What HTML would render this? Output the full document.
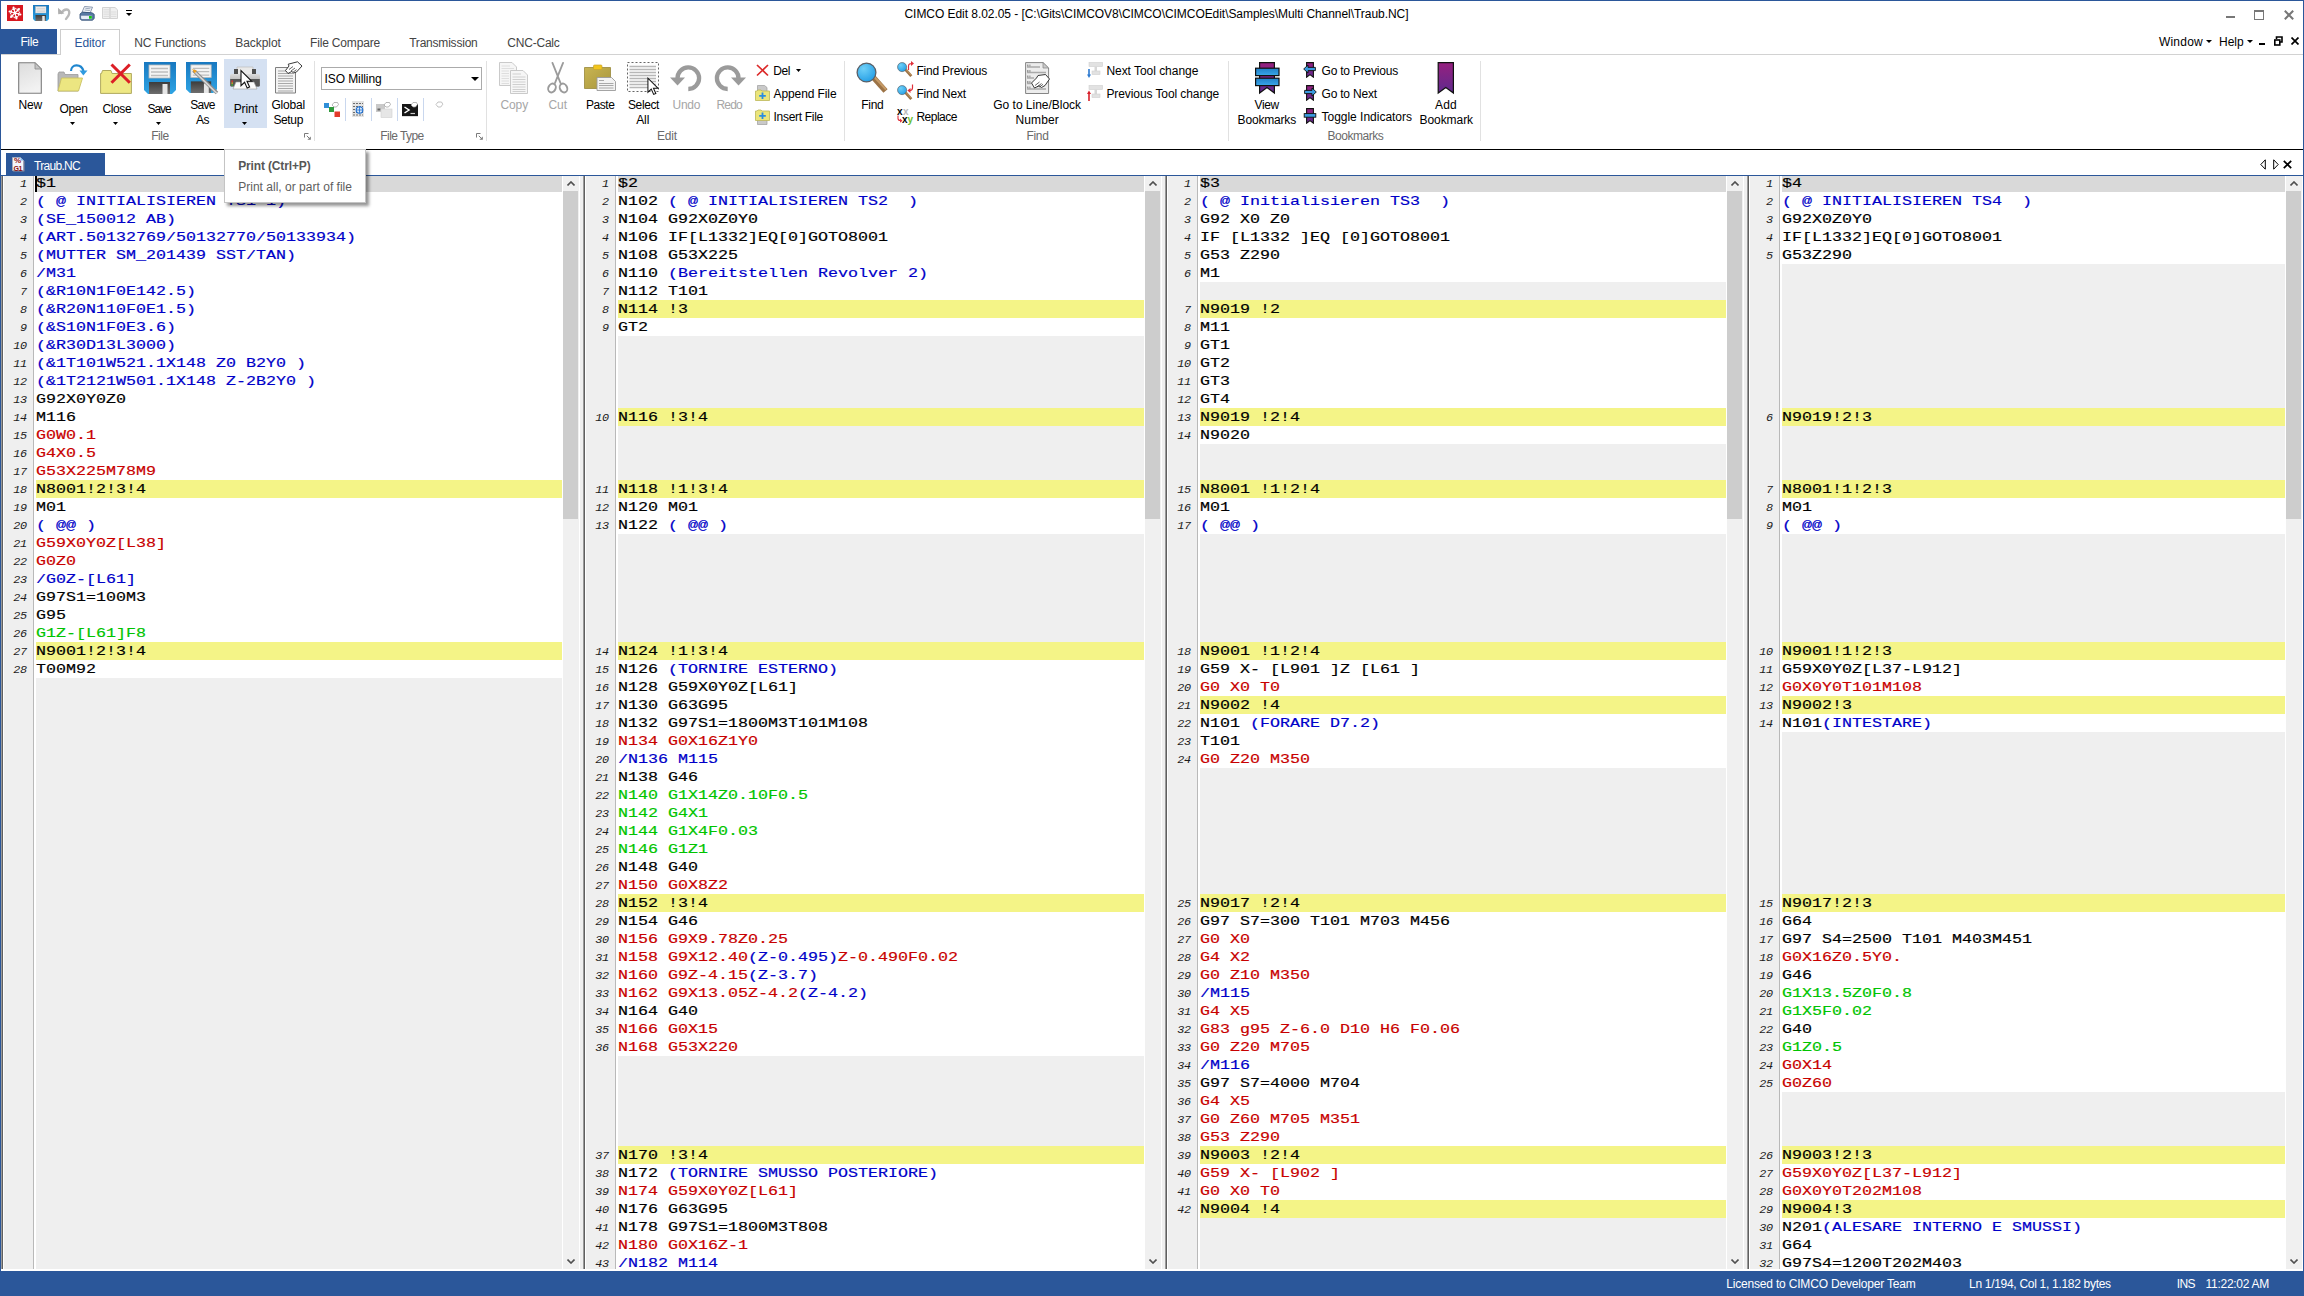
<!DOCTYPE html>
<html><head><meta charset="utf-8"><title>CIMCO Edit</title>
<style>
html,body{margin:0;padding:0}
body{width:2304px;height:1296px;position:relative;overflow:hidden;background:#fff;font-family:"Liberation Sans",sans-serif;font-size:12px;line-height:12px;color:#000}
.a{position:absolute;display:block}
.t{position:absolute;white-space:pre}
.pane{position:absolute;top:176px;height:1093px;overflow:hidden;background:#fff}
.rows{position:absolute;left:0;top:-2px;right:0}
.r{position:relative;height:18px}
.r i{position:absolute;left:0;width:25.6px;top:1px;height:18px;text-align:right;font:italic 11.8px/19.4px "Liberation Mono",monospace;letter-spacing:-0.4px;color:#1c1c1c}
.r b{position:absolute;left:35px;top:0;height:18px;right:0;font:normal 13.3px/18.9px "Liberation Mono",monospace;white-space:pre;-webkit-text-stroke:0.18px currentColor}
.r b u{position:absolute;left:0;top:1px;text-decoration:none;display:block;transform-origin:0 0;transform:scaleX(1.2529)}
.f b{background:#efefef}
.y b{background:#f4f487}
.c b{background:#d9d9d9}
.b{color:#0000c8}.rd{color:#c80000}.g{color:#00c400}
</style></head>
<body>
<div class="a" style="left:0px;top:0px;width:2304px;height:1px;background:#2b579a;"></div>
<div class="a" style="left:0px;top:0px;width:1px;height:1296px;background:#2b579a;"></div>
<div class="a" style="left:2303px;top:0px;width:1px;height:1296px;background:#2b579a;"></div>
<svg class="a" style="left:7px;top:5px" width="16" height="16" viewBox="0 0 16 16"><rect width="16" height="16" fill="#d81820"/><path d="M8 8L13.41 9.45M11.19 8.85L11.84 10.64M11.19 8.85L12.64 7.63M8 8L9.45 13.41M8.85 11.19L7.63 12.64M8.85 11.19L10.64 11.84M8 8L4.04 11.96M5.67 10.33L3.80 10.00M5.67 10.33L6.00 12.20M8 8L2.59 6.55M4.81 7.15L4.16 5.36M4.81 7.15L3.36 8.37M8 8L6.55 2.59M7.15 4.81L8.37 3.36M7.15 4.81L5.36 4.16M8 8L11.96 4.04M10.33 5.67L12.20 6.00M10.33 5.67L10.00 3.80" stroke="#fff" stroke-width="1.15" stroke-linecap="round" fill="none"/><g fill="#fff"><circle cx="13.41" cy="9.45" r="1.05"/><circle cx="9.45" cy="13.41" r="1.05"/><circle cx="4.04" cy="11.96" r="1.05"/><circle cx="2.59" cy="6.55" r="1.05"/><circle cx="6.55" cy="2.59" r="1.05"/><circle cx="11.96" cy="4.04" r="1.05"/><circle cx="8" cy="8" r="1.3"/></g></svg>
<svg class="a" style="left:33px;top:5px" width="16" height="16" viewBox="0 0 32 32"><defs><linearGradient id="fg33" x1="0" y1="0" x2="0" y2="1"><stop offset="0" stop-color="#1878c0"/><stop offset="1" stop-color="#2ea4e4"/></linearGradient><linearGradient id="fd33" x1="0" y1="0" x2="0" y2="1"><stop offset="0" stop-color="#3c3c3c"/><stop offset="1" stop-color="#6e6e6e"/></linearGradient></defs><path d="M0 0H32V28L28 32H4L0 28Z" fill="url(#fg33)"/><rect x="5" y="3" width="21" height="13" fill="#f4f4f4" stroke="#b9b9b9" stroke-width="0.8"/><path d="M7 6.5H24M7 10H24M7 13.5H24" stroke="#bdbdbd" stroke-width="1.3"/><rect x="5" y="20" width="21" height="12" fill="url(#fd33)"/><rect x="18.5" y="22" width="5" height="10" fill="#e6e6e6"/></svg>
<svg class="a" style="left:57px;top:5px" width="15" height="16" viewBox="0 0 15 16"><path d="M4.5 8C7 3.5 12.5 3 12.3 8C12.2 10.5 10.5 12.5 9 14" fill="none" stroke="#b9b9b9" stroke-width="2.4" stroke-linecap="round"/><path d="M1 2.8L1.2 9.2L7.4 8.6Z" fill="#b0b0b0"/></svg>
<svg class="a" style="left:79px;top:5px" width="16" height="17" viewBox="0 0 16 17"><path d="M5.5 1.5L13.5 2.2L11.2 7.8L3 7.2Z" fill="#f3f6fb" stroke="#6d7f9a" stroke-width="0.8"/><path d="M6.3 3.3L11.5 3.8M5.6 5L10.8 5.5" stroke="#8c9ab0" stroke-width="0.8"/><path d="M1 9L3.2 7.2L13 7.8L15.2 9.3V13.6L13.4 15.2H2.6L1 13.8Z" fill="#5a7ca6" stroke="#2c4a72" stroke-width="0.8"/><path d="M1.6 10.3H13.2V14.6H3L1.6 13.4Z" fill="#e6edf8" stroke="#3a5a86" stroke-width="0.6"/><rect x="10" y="11" width="2.8" height="2.7" fill="#14c814"/></svg>
<svg class="a" style="left:102px;top:7px" width="16" height="12" viewBox="0 0 16 12"><path d="M0.5 0.5H8V11.5H0.5Z M8 0.5H13L15.5 2.8V11.5H8Z" fill="#f0f0f0" stroke="#d3d3d3"/><path d="M1.5 2.8H7M1.5 5H7M1.5 7.2H7M1.5 9.4H7M9 5H14.5M9 7.2H14.5M9 9.4H14.5" stroke="#dcdcdc"/></svg>
<div class="a" style="left:126px;top:10px;width:6px;height:1px;background:#000;"></div>
<svg class="a" style="left:126px;top:13px" width="6" height="3" viewBox="0 0 6 3"><path d="M0 0H6L3.0 3Z" fill="#000"/></svg>
<span class="t" style="left:904.50px;top:7.84px;letter-spacing:-0.052px;">CIMCO Edit 8.02.05 - [C:\Gits\CIMCOV8\CIMCO\CIMCOEdit\Samples\Multi Channel\Traub.NC]</span>
<div class="a" style="left:2226px;top:16px;width:9px;height:2px;background:#777;"></div>
<div class="a" style="left:2254px;top:10px;width:8px;height:7px;border:1px solid #777;border-top:2px solid #777"></div>
<svg class="a" style="left:2284px;top:10px" width="10" height="10" viewBox="0 0 10 10"><path d="M0.8 0.8L9.2 9.2M9.2 0.8L0.8 9.2" stroke="#777" stroke-width="2"/></svg>
<div class="a" style="left:0px;top:29px;width:57px;height:25px;background:#2b579a;"></div>
<span class="t" style="left:20.40px;top:36.14px;color:#fff;letter-spacing:-0.359px;">File</span>
<div class="a" style="left:1px;top:54px;width:60px;height:1px;background:#d2d2d2;"></div>
<div class="a" style="left:119px;top:54px;width:2184px;height:1px;background:#d2d2d2;"></div>
<div class="a" style="left:60px;top:29px;width:58px;height:25px;border:1px solid #cdcdcd;border-bottom:none"></div>
<span class="t" style="left:74.50px;top:36.84px;color:#2b579a;letter-spacing:-0.092px;">Editor</span>
<span class="t" style="left:134.30px;top:36.84px;color:#444;letter-spacing:-0.091px;">NC Functions</span>
<span class="t" style="left:235.20px;top:36.84px;color:#444;letter-spacing:-0.053px;">Backplot</span>
<span class="t" style="left:310.00px;top:36.84px;color:#444;letter-spacing:-0.169px;">File Compare</span>
<span class="t" style="left:409.20px;top:36.84px;color:#444;letter-spacing:-0.209px;">Transmission</span>
<span class="t" style="left:507.30px;top:36.84px;color:#444;letter-spacing:-0.213px;">CNC-Calc</span>
<span class="t" style="left:2158.90px;top:35.84px;letter-spacing:0.237px;">Window</span>
<svg class="a" style="left:2206px;top:40px" width="6" height="3" viewBox="0 0 6 3"><path d="M0 0H6L3.0 3Z" fill="#000"/></svg>
<span class="t" style="left:2219.00px;top:35.84px;letter-spacing:-0.020px;">Help</span>
<svg class="a" style="left:2247px;top:40px" width="6" height="3" viewBox="0 0 6 3"><path d="M0 0H6L3.0 3Z" fill="#000"/></svg>
<div class="a" style="left:2259px;top:43px;width:6px;height:2px;background:#000;"></div>
<svg class="a" style="left:2274px;top:36px" width="9" height="10" viewBox="0 0 9 10"><path d="M2.5 3V1H8V6H6" fill="none" stroke="#000" stroke-width="1.6"/><rect x="0.8" y="4" width="5" height="5" fill="none" stroke="#000" stroke-width="1.6"/></svg>
<svg class="a" style="left:2291px;top:37px" width="8" height="8" viewBox="0 0 8 8"><path d="M0.5 0.5L7.5 7.5M7.5 0.5L0.5 7.5" stroke="#000" stroke-width="1.7"/></svg>
<div class="a" style="left:314px;top:61px;width:1px;height:80px;background:#e1e1e1;"></div>
<div class="a" style="left:486px;top:61px;width:1px;height:80px;background:#e1e1e1;"></div>
<div class="a" style="left:844px;top:61px;width:1px;height:80px;background:#e1e1e1;"></div>
<div class="a" style="left:1228px;top:61px;width:1px;height:80px;background:#e1e1e1;"></div>
<div class="a" style="left:1480px;top:61px;width:1px;height:80px;background:#e1e1e1;"></div>
<svg class="a" style="left:18px;top:62px" width="24" height="32" viewBox="0 0 24 32"><defs><linearGradient id="gn" x1="0" y1="0" x2="0.3" y2="1"><stop offset="0" stop-color="#dcdcdc"/><stop offset="1" stop-color="#f2f2f2"/></linearGradient></defs><path d="M0.7 0.7H17L23.3 7V31.3H0.7Z" fill="url(#gn)" stroke="#7d7d7d" stroke-width="1.1"/><path d="M17 0.7V7H23.3Z" fill="#c4c4c4" stroke="#8a8a8a" stroke-width="0.8"/></svg>
<span class="t" style="left:18.50px;top:98.84px;letter-spacing:-0.169px;">New</span>
<svg class="a" style="left:57px;top:63px" width="32" height="29" viewBox="0 0 32 29"><path d="M1 11L2 9H7L8 11.5H21V28H1Z" fill="#b8b8b8" stroke="#9a9a9a" stroke-width="0.8"/><path d="M4.5 15H25.5L21.5 28H1Z" fill="#ece681" stroke="#c9c163" stroke-width="0.9"/><path d="M14 8C14 1 24 0 26.5 8" fill="none" stroke="#1f86cf" stroke-width="2.2"/><path d="M22.5 7.5H30.5L26.3 12.5Z" fill="#2f9be0"/></svg>
<span class="t" style="left:59.40px;top:102.84px;letter-spacing:-0.289px;">Open</span>
<svg class="a" style="left:70px;top:122px" width="5" height="3" viewBox="0 0 5 3"><path d="M0 0H5L2.5 3Z" fill="#000"/></svg>
<svg class="a" style="left:100px;top:63px" width="33" height="31" viewBox="0 0 33 31"><path d="M0.6 10.5H1.5L2.5 7.5H11L12 10.5H31.4V30.4H0.6Z" fill="#eee884" stroke="#b0a960" stroke-width="1"/><path d="M11.5 1.5L29.8 19.8M29.8 1.5L11.5 19.8" stroke="#dc1f26" stroke-width="3"/></svg>
<span class="t" style="left:102.60px;top:102.84px;letter-spacing:-0.416px;">Close</span>
<svg class="a" style="left:113px;top:122px" width="5" height="3" viewBox="0 0 5 3"><path d="M0 0H5L2.5 3Z" fill="#000"/></svg>
<svg class="a" style="left:144px;top:62px" width="32" height="32" viewBox="0 0 32 32"><defs><linearGradient id="fg144" x1="0" y1="0" x2="0" y2="1"><stop offset="0" stop-color="#1878c0"/><stop offset="1" stop-color="#2ea4e4"/></linearGradient><linearGradient id="fd144" x1="0" y1="0" x2="0" y2="1"><stop offset="0" stop-color="#3c3c3c"/><stop offset="1" stop-color="#6e6e6e"/></linearGradient></defs><path d="M0 0H32V28L28 32H4L0 28Z" fill="url(#fg144)"/><rect x="5" y="3" width="21" height="13" fill="#f4f4f4" stroke="#b9b9b9" stroke-width="0.8"/><path d="M7 6.5H24M7 10H24M7 13.5H24" stroke="#bdbdbd" stroke-width="1.3"/><rect x="5" y="20" width="21" height="12" fill="url(#fd144)"/><rect x="18.5" y="22" width="5" height="10" fill="#e6e6e6"/></svg>
<span class="t" style="left:147.40px;top:102.84px;letter-spacing:-0.988px;">Save</span>
<svg class="a" style="left:156px;top:122px" width="5" height="3" viewBox="0 0 5 3"><path d="M0 0H5L2.5 3Z" fill="#000"/></svg>
<svg class="a" style="left:186px;top:62px" width="31" height="31" viewBox="0 0 32 32"><defs><linearGradient id="fg186" x1="0" y1="0" x2="0" y2="1"><stop offset="0" stop-color="#1878c0"/><stop offset="1" stop-color="#2ea4e4"/></linearGradient><linearGradient id="fd186" x1="0" y1="0" x2="0" y2="1"><stop offset="0" stop-color="#3c3c3c"/><stop offset="1" stop-color="#6e6e6e"/></linearGradient></defs><path d="M0 0H32V28L28 32H4L0 28Z" fill="url(#fg186)"/><rect x="5" y="3" width="21" height="13" fill="#f4f4f4" stroke="#b9b9b9" stroke-width="0.8"/><path d="M7 6.5H24M7 10H24M7 13.5H24" stroke="#bdbdbd" stroke-width="1.3"/><rect x="5" y="20" width="21" height="12" fill="url(#fd186)"/><rect x="18.5" y="22" width="5" height="10" fill="#e6e6e6"/></svg>
<svg class="a" style="left:190px;top:66px" width="30" height="30" viewBox="0 0 30 30"><path d="M3.5 4.5L27 27" stroke="#8d8d8d" stroke-width="3.6"/><path d="M4.5 5.5L27 27.5" stroke="#d8d8d8" stroke-width="1.6"/><path d="M2 3L7 4.8L4.6 7.3Z" fill="#f2a21e"/></svg>
<span class="t" style="left:190.25px;top:98.84px;letter-spacing:-0.713px;">Save</span>
<span class="t" style="left:196.00px;top:113.84px;letter-spacing:-0.502px;">As</span>
<div class="a" style="left:224px;top:59px;width:43px;height:69px;background:#d5e1f2;"></div>
<svg class="a" style="left:229px;top:66px" width="32" height="26" viewBox="0 0 32 26"><defs><linearGradient id="pg" x1="0" y1="0" x2="0" y2="1"><stop offset="0" stop-color="#dcdcdc"/><stop offset="1" stop-color="#9b9b9b"/></linearGradient></defs><path d="M8 1H24V9H8Z" fill="#e9e9e9" stroke="#bdbdbd" stroke-width="0.7"/><rect x="5" y="3" width="4" height="7" fill="#4e4e4e"/><rect x="23" y="3" width="4" height="7" fill="#4e4e4e"/><path d="M1 9.5C1 8.5 2 8 3 8H29C30 8 31 8.5 31 9.5V19C31 20 30.3 20.5 29.5 20.5H2.5C1.7 20.5 1 20 1 19Z" fill="url(#pg)"/><path d="M1.2 13H30.8V19.5C30.8 20 30 20.5 29.5 20.5H2.5C2 20.5 1.2 20 1.2 19.5Z" fill="#565656"/><path d="M7 16H25L28 23H4Z" fill="#fbfbfb" stroke="#9c9c9c" stroke-width="0.6"/><rect x="2.4" y="14.5" width="1.6" height="1.4" fill="#e03030"/><rect x="2.4" y="16.4" width="1.6" height="1.4" fill="#e0a020"/><rect x="2.4" y="18.3" width="1.6" height="1.4" fill="#40b030"/></svg>
<span class="t" style="left:233.70px;top:102.84px;letter-spacing:-0.115px;">Print</span>
<svg class="a" style="left:241.5px;top:122px" width="5" height="3" viewBox="0 0 5 3"><path d="M0 0H5L2.5 3Z" fill="#000"/></svg>
<svg class="a" style="left:239.5px;top:69px" width="13" height="21" viewBox="0 0 13 20"><path d="M1 1V16.2L4.6 12.8L7.2 18.6L9.6 17.5L7 11.8H11.8Z" fill="#fff" stroke="#111" stroke-width="1.1" stroke-linejoin="miter"/></svg>
<svg class="a" style="left:274px;top:61px" width="30" height="33" viewBox="0 0 30 33"><path d="M1.5 6.5H21.5V32H1.5Z" fill="#f3f3f3" stroke="#7f7f7f" stroke-width="1"/><path d="M4 10H19M4 12.5H19M4 15H19M4 17.5H19M4 20H19M4 22.5H19M4 25H19M4 27.5H19M4 30H19" stroke="#a8a8a8" stroke-width="1.2"/><path d="M11.5 9.5L15 5L14.2 3.2L23.5 0.8L28 5L22.5 11L19.5 12L17.8 10.4L14 12.5Z" fill="#fff" stroke="#222" stroke-width="0.9" stroke-linejoin="round"/><path d="M15 8.5L19 5.5M17 10L21 7M19 11.3L22.5 8.6" stroke="#222" stroke-width="0.7"/></svg>
<span class="t" style="left:271.45px;top:98.84px;letter-spacing:-0.198px;">Global</span>
<span class="t" style="left:273.45px;top:113.84px;letter-spacing:-0.372px;">Setup</span>
<span class="t" style="left:151.30px;top:129.84px;color:#6a6a6a;letter-spacing:-0.509px;">File</span>
<svg class="a" style="left:304px;top:133px" width="8" height="8" viewBox="0 0 8 8"><path d="M0.5 4.5V0.5H4.5" fill="none" stroke="#7a7a7a" stroke-width="1"/><path d="M2.8 2.8L6 6" stroke="#7a7a7a" stroke-width="1"/><path d="M6.8 3.4V6.8H3.4Z" fill="#7a7a7a"/></svg>
<svg class="a" style="left:476px;top:133px" width="8" height="8" viewBox="0 0 8 8"><path d="M0.5 4.5V0.5H4.5" fill="none" stroke="#7a7a7a" stroke-width="1"/><path d="M2.8 2.8L6 6" stroke="#7a7a7a" stroke-width="1"/><path d="M6.8 3.4V6.8H3.4Z" fill="#7a7a7a"/></svg>
<div class="a" style="left:321px;top:67px;width:159px;height:21px;border:1px solid #ababab;background:#fff"></div>
<span class="t" style="left:324.50px;top:72.84px;letter-spacing:-0.083px;">ISO Milling</span>
<svg class="a" style="left:471px;top:77px" width="8" height="4" viewBox="0 0 8 4"><path d="M0 0H8L4.0 4Z" fill="#000"/></svg>
<div class="a" style="left:345px;top:98px;width:1px;height:23px;background:#c9d7ee;"></div>
<div class="a" style="left:371px;top:98px;width:1px;height:23px;background:#c9d7ee;"></div>
<div class="a" style="left:397px;top:98px;width:1px;height:23px;background:#c9d7ee;"></div>
<div class="a" style="left:423px;top:98px;width:1px;height:23px;background:#c9d7ee;"></div>
<svg class="a" style="left:324px;top:101px" width="17" height="17" viewBox="0 0 17 17"><rect x="0" y="2" width="5" height="5" fill="#2f8fd8"/><rect x="5" y="6" width="5" height="5" fill="#2f9a3c"/><rect x="10.5" y="10.5" width="5.5" height="5.5" fill="#e23a2a"/><path d="M8 4L10 1.5H13.5L14.5 3.5L12.5 6H10Z" fill="#fff" stroke="#999" stroke-width="0.7"/></svg>
<svg class="a" style="left:352px;top:101px" width="12" height="16" viewBox="0 0 12 16"><rect width="12" height="16" fill="#e4e4e4"/><path d="M1 2.5H11M1 5.5H11M1 8.5H11M1 11.5H11M1 14H11" stroke="#6c6c6c" stroke-width="1.2" stroke-dasharray="2 1"/><circle cx="7.5" cy="9" r="3.3" fill="#d8e8f8" stroke="#1f6fd0" stroke-width="1.1"/><path d="M7.5 5.7V12.3M4.2 9H10.8" stroke="#1f6fd0" stroke-width="0.8"/></svg>
<svg class="a" style="left:376px;top:101px" width="17" height="17" viewBox="0 0 17 17"><rect x="0" y="3" width="9" height="8" fill="#c9c9c9"/><rect x="1.5" y="7.5" width="3" height="2" fill="#666"/><rect x="5" y="8" width="11" height="8.5" fill="#e6e6e6" stroke="#cfcfcf" stroke-width="0.6"/><path d="M8 4L10 1.5H13.5L14.5 3.5L12.5 6H10Z" fill="#fff" stroke="#999" stroke-width="0.7"/></svg>
<svg class="a" style="left:402px;top:101px" width="17" height="17" viewBox="0 0 17 17"><rect x="0" y="3" width="16" height="13" fill="#161616"/><path d="M0 15.5H16" stroke="#ddd" stroke-width="1"/><path d="M2.5 6L7 9L2.5 12" fill="none" stroke="#fff" stroke-width="1.5"/><path d="M8.5 12.5H13" stroke="#ccc" stroke-width="1.2"/><path d="M9 4L11 1.5H14.5L15.5 3.5L13.5 6H11Z" fill="#fff" stroke="#999" stroke-width="0.7"/></svg>
<svg class="a" style="left:435px;top:101px" width="9" height="8" viewBox="0 0 9 8"><path d="M1 3.5L3 1H6.5L7.8 3.2L5.8 6H3Z" fill="#fff" stroke="#b3b3b3" stroke-width="0.8"/></svg>
<span class="t" style="left:380.30px;top:129.84px;color:#6a6a6a;letter-spacing:-0.563px;">File Type</span>
<svg class="a" style="left:499px;top:62px" width="30" height="32" viewBox="0 0 30 32"><g stroke="#c4c4c4" stroke-width="0.9" fill="#f6f6f6"><path d="M0.5 0.5H13L17.5 5V23.5H0.5Z"/><path d="M11.5 8.5H24L28.5 13V31.5H11.5Z"/></g><path d="M2.5 4H11M2.5 6.5H15M2.5 9H10M2.5 11.5H10M2.5 14H10M2.5 16.5H10M2.5 19H10M2.5 21.5H10" stroke="#dedede" stroke-width="1.1"/><path d="M13.5 12H22M13.5 15H26.5M13.5 17.5H26.5M13.5 20H26.5M13.5 22.5H26.5M13.5 25H26.5M13.5 27.5H26.5M13.5 29.5H26.5" stroke="#cfcfcf" stroke-width="1.1"/></svg>
<span class="t" style="left:500.50px;top:98.84px;color:#a6a6a6;letter-spacing:-0.129px;">Copy</span>
<svg class="a" style="left:547px;top:62px" width="22" height="32" viewBox="0 0 22 32"><path d="M5.5 1L13.5 21M16 1L8 21" stroke="#9b9b9b" stroke-width="1.9" stroke-linecap="round"/><ellipse cx="5" cy="26" rx="3.6" ry="4.6" fill="none" stroke="#9b9b9b" stroke-width="1.9" transform="rotate(25 5 26)"/><ellipse cx="16.5" cy="26" rx="3.6" ry="4.6" fill="none" stroke="#9b9b9b" stroke-width="1.9" transform="rotate(-25 16.5 26)"/></svg>
<span class="t" style="left:548.50px;top:98.84px;color:#a6a6a6;letter-spacing:-0.058px;">Cut</span>
<svg class="a" style="left:584px;top:64px" width="33" height="28" viewBox="0 0 33 28"><defs><linearGradient id="pa" x1="0" y1="0" x2="1" y2="1"><stop offset="0" stop-color="#c8b452"/><stop offset="1" stop-color="#a8963c"/></linearGradient></defs><path d="M0.5 3.5H26.5V24.5H0.5Z" fill="url(#pa)" stroke="#98883a" stroke-width="0.8"/><rect x="9.5" y="1" width="8.5" height="4.5" rx="1" fill="#f2c51c" stroke="#c9a42a" stroke-width="0.7"/><path d="M13 13.5H27.5L31.5 17.5V26.5H13Z" fill="#f3f3f3" stroke="#9a9a9a" stroke-width="0.9"/><path d="M15 16.5H20M15 19.5H29.5M15 21.5H29.5M15 24H29.5" stroke="#a9a9a9" stroke-width="1.1"/></svg>
<span class="t" style="left:586.00px;top:98.84px;letter-spacing:-0.437px;">Paste</span>
<svg class="a" style="left:627px;top:62px" width="33" height="32" viewBox="0 0 33 32"><rect x="0.5" y="0.5" width="31" height="29" fill="#fdfdfd" stroke="#555" stroke-width="0.9" stroke-dasharray="2 2"/><path d="M2.5 4.5H29M2.5 7.5H29M2.5 10.5H29M2.5 13.5H29M2.5 16.5H29M2.5 19.5H29M2.5 22.5H29M2.5 25.5H29" stroke="#b7b7b7" stroke-width="1.3"/></svg>
<svg class="a" style="left:647px;top:77px" width="12" height="19" viewBox="0 0 13 20"><path d="M1 1V16.2L4.6 12.8L7.2 18.6L9.6 17.5L7 11.8H11.8Z" fill="#fff" stroke="#111" stroke-width="1.1" stroke-linejoin="miter"/></svg>
<span class="t" style="left:628.00px;top:98.84px;letter-spacing:-0.392px;">Select</span>
<span class="t" style="left:636.20px;top:113.84px;letter-spacing:-0.112px;">All</span>
<svg class="a" style="left:670px;top:64px" width="32" height="28" viewBox="0 0 32 28"><path d="M7.5 14.5A10.8 10.8 0 1 1 18.3 25" fill="none" stroke="#9b9b9b" stroke-width="4.3"/><path d="M0 13.5H15L7.5 21.5Z" fill="#9b9b9b"/></svg>
<svg class="a" style="left:714px;top:64px" width="32" height="28" viewBox="0 0 32 28"><path d="M24.5 14.5A10.8 10.8 0 1 0 13.7 25" fill="none" stroke="#9b9b9b" stroke-width="4.3"/><path d="M32 13.5H17L24.5 21.5Z" fill="#9b9b9b"/></svg>
<span class="t" style="left:672.60px;top:98.84px;color:#a6a6a6;letter-spacing:-0.322px;">Undo</span>
<span class="t" style="left:716.50px;top:98.84px;color:#a6a6a6;letter-spacing:-0.797px;">Redo</span>
<svg class="a" style="left:756px;top:64px" width="13" height="13" viewBox="0 0 13 13"><path d="M1 1L12 11.5M12 1L1 11.5" stroke="#dc2a2a" stroke-width="1.7"/></svg>
<span class="t" style="left:773.30px;top:64.84px;letter-spacing:-0.502px;">Del</span>
<svg class="a" style="left:796px;top:69px" width="5" height="3" viewBox="0 0 5 3"><path d="M0 0H5L2.5 3Z" fill="#000"/></svg>
<svg class="a" style="left:755px;top:85px" width="15" height="17" viewBox="0 0 15 17"><path d="M2.5 0.5H9.5L12 2.5V6.5H2.5Z" fill="#c9c9c9" stroke="#9c9c9c" stroke-width="0.7"/><path d="M0.5 6H2L3 5H6L7 6H14.5V15.5H0.5Z" fill="#ebe57a" stroke="#bdb65a" stroke-width="0.8"/><path d="M7.5 7.5V14M4.2 10.8H10.8" stroke="#2a8ce0" stroke-width="1.8"/></svg>
<svg class="a" style="left:755px;top:108px" width="15" height="17" viewBox="0 0 15 17"><path d="M2.5 10.5H9.5L12 12.5V16.5H2.5Z" fill="#c9c9c9" stroke="#9c9c9c" stroke-width="0.7"/><path d="M0.5 3H2L3 2H6L7 3H14.5V12.5H0.5Z" fill="#ebe57a" stroke="#bdb65a" stroke-width="0.8"/><path d="M7.5 4.5V11M4.2 7.8H10.8" stroke="#2a8ce0" stroke-width="1.8"/></svg>
<span class="t" style="left:773.50px;top:87.84px;letter-spacing:-0.095px;">Append File</span>
<span class="t" style="left:773.50px;top:110.84px;letter-spacing:-0.289px;">Insert File</span>
<span class="t" style="left:657.00px;top:129.84px;color:#6a6a6a;letter-spacing:-0.170px;">Edit</span>
<svg class="a" style="left:856px;top:62px" width="33" height="33" viewBox="0 0 33 33"><defs><radialGradient id="mg856" cx="0.35" cy="0.3" r="0.8"><stop offset="0" stop-color="#6fd0f8"/><stop offset="1" stop-color="#1f9be4"/></radialGradient></defs><path d="M17 15L29.5 29" stroke="#9c7346" stroke-width="5.6"/><path d="M17.5 14L30 27.5" stroke="#c69a66" stroke-width="2"/><circle cx="10.5" cy="10.5" r="9.4" fill="url(#mg856)" stroke="#5a5f66" stroke-width="1.3"/></svg>
<span class="t" style="left:861.30px;top:98.84px;letter-spacing:-0.311px;">Find</span>
<svg class="a" style="left:897px;top:62px" width="16" height="16" viewBox="0 0 33 33"><defs><radialGradient id="mg897" cx="0.35" cy="0.3" r="0.8"><stop offset="0" stop-color="#6fd0f8"/><stop offset="1" stop-color="#1f9be4"/></radialGradient></defs><path d="M17 15L29.5 29" stroke="#9c7346" stroke-width="5.6"/><path d="M17.5 14L30 27.5" stroke="#c69a66" stroke-width="2"/><circle cx="10.5" cy="10.5" r="9.4" fill="url(#mg897)" stroke="#5a5f66" stroke-width="1.3"/></svg>
<svg class="a" style="left:897px;top:85px" width="16" height="16" viewBox="0 0 33 33"><defs><radialGradient id="mg897" cx="0.35" cy="0.3" r="0.8"><stop offset="0" stop-color="#6fd0f8"/><stop offset="1" stop-color="#1f9be4"/></radialGradient></defs><path d="M17 15L29.5 29" stroke="#9c7346" stroke-width="5.6"/><path d="M17.5 14L30 27.5" stroke="#c69a66" stroke-width="2"/><circle cx="10.5" cy="10.5" r="9.4" fill="url(#mg897)" stroke="#5a5f66" stroke-width="1.3"/></svg>
<svg class="a" style="left:907px;top:61px" width="7" height="10" viewBox="0 0 7 10"><path d="M1.5 9V5C1.5 3 3 2.5 5 2.5" fill="none" stroke="#e0303a" stroke-width="1.2"/><path d="M4 0L7 2.5L4 5Z" fill="#e0303a"/></svg>
<svg class="a" style="left:907px;top:84px" width="7" height="10" viewBox="0 0 7 10"><path d="M5.5 0.5V4C5.5 6 4 6.5 2.5 6.5" fill="none" stroke="#e0303a" stroke-width="1.2"/><path d="M3.5 4L0.3 6.5L3.5 9Z" fill="#e0303a"/></svg>
<span class="t" style="left:916.40px;top:64.84px;letter-spacing:-0.205px;">Find Previous</span>
<span class="t" style="left:916.40px;top:87.84px;letter-spacing:-0.206px;">Find Next</span>
<span class="t" style="left:916.40px;top:110.84px;letter-spacing:-0.490px;">Replace</span>
<span class="t" style="left:897.00px;top:106.53px;font-size:10px;line-height:10px;font-weight:bold;">x</span>
<span class="t" style="left:903.00px;top:106.53px;font-size:10px;line-height:10px;color:#bbb;font-weight:bold;">x</span>
<span class="t" style="left:902.00px;top:115.03px;font-size:10px;line-height:10px;font-weight:bold;">x</span>
<span class="t" style="left:907.50px;top:115.03px;font-size:10px;line-height:10px;color:#6cc030;font-weight:bold;">y</span>
<svg class="a" style="left:897px;top:115px" width="6" height="8" viewBox="0 0 6 8"><path d="M1 0.5V3.5C1 5 2 5.5 3.5 5.5" fill="none" stroke="#e0303a" stroke-width="1.1"/><path d="M3 3.5L5.5 5.7L3 7.8Z" fill="#e0303a"/></svg>
<svg class="a" style="left:1025px;top:62px" width="26" height="33" viewBox="0 0 26 33"><path d="M0.6 0.6H18L23.6 6V31.5H0.6Z" fill="#ececec" stroke="#858585" stroke-width="1"/><path d="M18 0.6V6H23.6Z" fill="#c9c9c9" stroke="#858585" stroke-width="0.7"/><path d="M2 5H15M2 10.5H21M2 16H9M2 21.5H6M2 27H21" stroke="#a9a9a9" stroke-width="1.3"/><path d="M2 3.5H5.5M2 9H5.5M2 14.5H5.5M2 20H5.5M2 25.5H5.5" stroke="#9a9a9a" stroke-width="2" stroke-dasharray="1.5 0.8"/><path d="M6.5 21L11.5 16L13 13.5L20.5 12.5L24.5 17L20 23.5L16.5 25.5L14 23.8L9.5 26Z" fill="#fff" stroke="#222" stroke-width="0.9" stroke-linejoin="round"/><path d="M10 23.5L14.5 20M12 25L16.5 21.5M14.5 25L18 22.3" stroke="#222" stroke-width="0.7"/></svg>
<span class="t" style="left:993.30px;top:98.84px;letter-spacing:-0.022px;">Go to Line/Block</span>
<span class="t" style="left:1015.50px;top:113.84px;letter-spacing:0.136px;">Number</span>
<span class="t" style="left:1026.50px;top:129.84px;color:#6a6a6a;letter-spacing:-0.336px;">Find</span>
<svg class="a" style="left:1087px;top:62px" width="16" height="17" viewBox="0 0 16 17"><rect x="2" y="0.5" width="13.5" height="4" fill="#e2e2e2" stroke="#cfcfcf" stroke-width="0.6"/><rect x="7.5" y="4.5" width="2.5" height="4.5" fill="#d7d7d7"/><rect x="5" y="9" width="8" height="3.5" fill="#e2e2e2" stroke="#cfcfcf" stroke-width="0.6"/><path d="M2 7V14" stroke="#2a78d0" stroke-width="1.6"/><path d="M0 12.5L2 16L4 12.5Z" fill="#2a78d0"/></svg>
<svg class="a" style="left:1087px;top:85px" width="16" height="17" viewBox="0 0 16 17"><rect x="2" y="0.5" width="13.5" height="4" fill="#e2e2e2" stroke="#cfcfcf" stroke-width="0.6"/><rect x="7.5" y="4.5" width="2.5" height="4.5" fill="#d7d7d7"/><rect x="5" y="9" width="8" height="3.5" fill="#e2e2e2" stroke="#cfcfcf" stroke-width="0.6"/><path d="M2 16V7" stroke="#d8202a" stroke-width="1.6"/><path d="M0 9L2 5.5L4 9Z" fill="#d8202a"/></svg>
<span class="t" style="left:1106.40px;top:64.84px;letter-spacing:-0.038px;">Next Tool change</span>
<span class="t" style="left:1106.40px;top:87.84px;letter-spacing:-0.086px;">Previous Tool change</span>
<svg class="a" style="left:1255px;top:62px" width="25" height="33" viewBox="0 0 25 33"><defs><linearGradient id="vb1" x1="0" y1="0" x2="0" y2="1"><stop offset="0" stop-color="#96207f"/><stop offset="1" stop-color="#5f2a8e"/></linearGradient><linearGradient id="vb2" x1="0" y1="0" x2="0" y2="1"><stop offset="0" stop-color="#1f7fc8"/><stop offset="1" stop-color="#3aa6e8"/></linearGradient></defs><path d="M4.6 0.6H19.4V31L12 25.5L4.6 31Z" fill="url(#vb1)" stroke="#111" stroke-width="1.2"/><rect x="0.6" y="6.2" width="23.4" height="7.4" fill="url(#vb2)" stroke="#111" stroke-width="1.2"/><rect x="0.6" y="16.2" width="23.4" height="7.4" fill="url(#vb2)" stroke="#111" stroke-width="1.2"/></svg>
<span class="t" style="left:1254.40px;top:98.84px;letter-spacing:-0.299px;">View</span>
<span class="t" style="left:1237.60px;top:113.84px;letter-spacing:-0.180px;">Bookmarks</span>
<svg class="a" style="left:1303px;top:62px" width="14" height="16" viewBox="0 0 14 16"><defs><linearGradient id="sb62" x1="0" y1="0" x2="0" y2="1"><stop offset="0" stop-color="#96207f"/><stop offset="1" stop-color="#5f2a8e"/></linearGradient></defs><path d="M3.6 0.6H10.4V15.2L7 12.6L3.6 15.2Z" fill="url(#sb62)" stroke="#111" stroke-width="1.1"/><path d="M0.7 7L5 3V5.4H12.4V8.6H5V11Z" fill="#3a9be0" stroke="#111" stroke-width="0.9"/></svg>
<svg class="a" style="left:1303px;top:85px" width="14" height="16" viewBox="0 0 14 16"><defs><linearGradient id="sb85" x1="0" y1="0" x2="0" y2="1"><stop offset="0" stop-color="#96207f"/><stop offset="1" stop-color="#5f2a8e"/></linearGradient></defs><path d="M3.6 0.6H10.4V15.2L7 12.6L3.6 15.2Z" fill="url(#sb85)" stroke="#111" stroke-width="1.1"/><path d="M13.3 7L9 3V5.4H1.6V8.6H9V11Z" fill="#3a9be0" stroke="#111" stroke-width="0.9"/></svg>
<svg class="a" style="left:1303px;top:108px" width="14" height="16" viewBox="0 0 14 16"><defs><linearGradient id="sb108" x1="0" y1="0" x2="0" y2="1"><stop offset="0" stop-color="#96207f"/><stop offset="1" stop-color="#5f2a8e"/></linearGradient></defs><path d="M3.6 0.6H10.4V15.2L7 12.6L3.6 15.2Z" fill="url(#sb108)" stroke="#111" stroke-width="1.1"/><rect x="1.2" y="5.6" width="11.6" height="3.6" fill="#3a9be0" stroke="#111" stroke-width="0.9"/></svg>
<span class="t" style="left:1321.50px;top:64.84px;letter-spacing:-0.205px;">Go to Previous</span>
<span class="t" style="left:1321.50px;top:87.84px;letter-spacing:-0.206px;">Go to Next</span>
<span class="t" style="left:1321.50px;top:110.84px;letter-spacing:-0.013px;">Toggle Indicators</span>
<svg class="a" style="left:1437px;top:62px" width="18" height="33" viewBox="0 0 18 33"><defs><linearGradient id="ab1" x1="0" y1="0" x2="0" y2="1"><stop offset="0" stop-color="#96207f"/><stop offset="1" stop-color="#5f2a8e"/></linearGradient></defs><path d="M1.2 0.6H16.4V31L8.8 25.5L1.2 31Z" fill="url(#ab1)" stroke="#111" stroke-width="1.2"/></svg>
<span class="t" style="left:1435.00px;top:98.84px;letter-spacing:0.216px;">Add</span>
<span class="t" style="left:1419.50px;top:113.84px;letter-spacing:-0.065px;">Bookmark</span>
<span class="t" style="left:1327.50px;top:129.84px;color:#6a6a6a;letter-spacing:-0.458px;">Bookmarks</span>
<div class="a" style="left:1px;top:149px;width:2302px;height:1px;background:#000;"></div>
<div class="a" style="left:6px;top:153px;width:99px;height:22px;background:#2b579a;"></div>
<svg class="a" style="left:12px;top:157px" width="13" height="15" viewBox="0 0 13 15"><path d="M0.5 0.5H8.5L11.5 3.5V13.5H0.5Z" fill="#f6f6fb" stroke="#aab" stroke-width="0.8"/><path d="M8.5 0.5V3.5H11.5Z" fill="#7ab6f0"/><path d="M1 14.2H12.2V4" stroke="#889" stroke-width="0.8" fill="none"/></svg>
<span class="t" style="left:14.00px;top:157.43px;font-size:8px;line-height:8px;color:#8f0f0f;font-weight:bold;">%</span>
<span class="t" style="left:13.40px;top:164.67px;font-size:7px;line-height:7px;color:#8f0f0f;font-weight:bold;letter-spacing:-0.419px;">G1</span>
<span class="t" style="left:34.00px;top:159.84px;color:#fff;letter-spacing:-0.696px;">Traub.NC</span>
<svg class="a" style="left:2260px;top:159px" width="6" height="11" viewBox="0 0 6 11"><path d="M5.3 0.8V10.2L0.8 5.5Z" fill="none" stroke="#000" stroke-width="1"/></svg>
<svg class="a" style="left:2273px;top:159px" width="6" height="11" viewBox="0 0 6 11"><path d="M0.7 0.8V10.2L5.2 5.5Z" fill="none" stroke="#000" stroke-width="1"/></svg>
<svg class="a" style="left:2283px;top:160px" width="9" height="9" viewBox="0 0 9 9"><path d="M0.8 0.8L8.2 8.2M8.2 0.8L0.8 8.2" stroke="#000" stroke-width="1.7"/></svg>
<div class="a" style="left:0px;top:1271px;width:2304px;height:25px;background:#2b579a;"></div>
<span class="t" style="left:1726.20px;top:1277.84px;color:#fff;letter-spacing:-0.181px;">Licensed to CIMCO Developer Team</span>
<span class="t" style="left:1969.00px;top:1277.84px;color:#fff;letter-spacing:-0.297px;">Ln 1/194, Col 1, 1.182 bytes</span>
<span class="t" style="left:2176.80px;top:1277.84px;color:#fff;letter-spacing:-0.601px;">INS</span>
<span class="t" style="left:2205.50px;top:1277.84px;color:#fff;letter-spacing:-0.272px;">11:22:02 AM</span>
<div class="a" style="left:1px;top:175px;width:2302px;height:1px;background:#2b579a;"></div>
<div class="pane" style="left:1px;width:561px">
<div class="a" style="left:0;top:0;width:1px;height:1093px;background:#9a9a9a"></div>
<div class="a" style="left:1px;top:0;width:1px;height:1093px;background:#606060"></div>
<div class="a" style="left:3px;top:0;width:29px;height:1093px;background:#efefef"></div>
<div class="a" style="left:32px;top:0;width:1px;height:1093px;background:#b9b9b9"></div>
<div class="rows">
<div class="r c"><i>1</i><b><u>$1</u></b></div>
<div class="r"><i>2</i><b><u><span class="b">( @ INITIALISIEREN TS1 1)</span></u></b></div>
<div class="r"><i>3</i><b><u><span class="b">(SE_150012 AB)</span></u></b></div>
<div class="r"><i>4</i><b><u><span class="b">(ART.50132769/50132770/50133934)</span></u></b></div>
<div class="r"><i>5</i><b><u><span class="b">(MUTTER SM_201439 SST/TAN)</span></u></b></div>
<div class="r"><i>6</i><b><u><span class="b">/M31</span></u></b></div>
<div class="r"><i>7</i><b><u><span class="b">(&amp;R10N1F0E142.5)</span></u></b></div>
<div class="r"><i>8</i><b><u><span class="b">(&amp;R20N110F0E1.5)</span></u></b></div>
<div class="r"><i>9</i><b><u><span class="b">(&amp;S10N1F0E3.6)</span></u></b></div>
<div class="r"><i>10</i><b><u><span class="b">(&amp;R30D13L3000)</span></u></b></div>
<div class="r"><i>11</i><b><u><span class="b">(&amp;1T101W521.1X148 Z0 B2Y0 )</span></u></b></div>
<div class="r"><i>12</i><b><u><span class="b">(&amp;1T2121W501.1X148 Z-2B2Y0 )</span></u></b></div>
<div class="r"><i>13</i><b><u>G92X0Y0Z0</u></b></div>
<div class="r"><i>14</i><b><u>M116</u></b></div>
<div class="r"><i>15</i><b><u><span class="rd">G0W0.1</span></u></b></div>
<div class="r"><i>16</i><b><u><span class="rd">G4X0.5</span></u></b></div>
<div class="r"><i>17</i><b><u><span class="rd">G53X225M78M9</span></u></b></div>
<div class="r y"><i>18</i><b><u>N8001!2!3!4</u></b></div>
<div class="r"><i>19</i><b><u>M01</u></b></div>
<div class="r"><i>20</i><b><u><span class="b">( @@ )</span></u></b></div>
<div class="r"><i>21</i><b><u><span class="rd">G59X0Y0Z[L38]</span></u></b></div>
<div class="r"><i>22</i><b><u><span class="rd">G0Z0</span></u></b></div>
<div class="r"><i>23</i><b><u><span class="b">/G0Z-[L61]</span></u></b></div>
<div class="r"><i>24</i><b><u>G97S1=100M3</u></b></div>
<div class="r"><i>25</i><b><u>G95</u></b></div>
<div class="r"><i>26</i><b><u><span class="g">G1Z-[L61]F8</span></u></b></div>
<div class="r y"><i>27</i><b><u>N9001!2!3!4</u></b></div>
<div class="r"><i>28</i><b><u>T00M92</u></b></div>
<div class="r f"><b></b></div>
<div class="r f"><b></b></div>
<div class="r f"><b></b></div>
<div class="r f"><b></b></div>
<div class="r f"><b></b></div>
<div class="r f"><b></b></div>
<div class="r f"><b></b></div>
<div class="r f"><b></b></div>
<div class="r f"><b></b></div>
<div class="r f"><b></b></div>
<div class="r f"><b></b></div>
<div class="r f"><b></b></div>
<div class="r f"><b></b></div>
<div class="r f"><b></b></div>
<div class="r f"><b></b></div>
<div class="r f"><b></b></div>
<div class="r f"><b></b></div>
<div class="r f"><b></b></div>
<div class="r f"><b></b></div>
<div class="r f"><b></b></div>
<div class="r f"><b></b></div>
<div class="r f"><b></b></div>
<div class="r f"><b></b></div>
<div class="r f"><b></b></div>
<div class="r f"><b></b></div>
<div class="r f"><b></b></div>
<div class="r f"><b></b></div>
<div class="r f"><b></b></div>
<div class="r f"><b></b></div>
<div class="r f"><b></b></div>
<div class="r f"><b></b></div>
<div class="r f"><b></b></div>
<div class="r f"><b></b></div>
</div></div>
<div class="a" style="left:563px;top:176px;width:16px;height:1093px;background:#f0f0f0;"></div>
<div class="a" style="left:563px;top:191px;width:15px;height:328px;background:#cdcdcd;"></div>
<svg class="a" style="left:567px;top:181px" width="8" height="5" viewBox="0 0 8 5"><path d="M0.5 4.5L4 1L7.5 4.5" fill="none" stroke="#505050" stroke-width="1.6"/></svg>
<svg class="a" style="left:567px;top:1259px" width="8" height="5" viewBox="0 0 8 5"><path d="M0.5 0.5L4 4L7.5 0.5" fill="none" stroke="#505050" stroke-width="1.6"/></svg>
<div class="a" style="left:580px;top:176px;width:3px;height:1093px;background:#efefef;"></div>
<div class="pane" style="left:583px;width:561px">
<div class="a" style="left:0;top:0;width:1px;height:1093px;background:#9a9a9a"></div>
<div class="a" style="left:1px;top:0;width:1px;height:1093px;background:#606060"></div>
<div class="a" style="left:3px;top:0;width:29px;height:1093px;background:#efefef"></div>
<div class="a" style="left:32px;top:0;width:1px;height:1093px;background:#b9b9b9"></div>
<div class="rows">
<div class="r c"><i>1</i><b><u>$2</u></b></div>
<div class="r"><i>2</i><b><u>N102 <span class="b">( @ INITIALISIEREN TS2  )</span></u></b></div>
<div class="r"><i>3</i><b><u>N104 G92X0Z0Y0</u></b></div>
<div class="r"><i>4</i><b><u>N106 IF[L1332]EQ[0]GOTO8001</u></b></div>
<div class="r"><i>5</i><b><u>N108 G53X225</u></b></div>
<div class="r"><i>6</i><b><u>N110 <span class="b">(Bereitstellen Revolver 2)</span></u></b></div>
<div class="r"><i>7</i><b><u>N112 T101</u></b></div>
<div class="r y"><i>8</i><b><u>N114 !3</u></b></div>
<div class="r"><i>9</i><b><u>GT2</u></b></div>
<div class="r f"><b></b></div>
<div class="r f"><b></b></div>
<div class="r f"><b></b></div>
<div class="r f"><b></b></div>
<div class="r y"><i>10</i><b><u>N116 !3!4</u></b></div>
<div class="r f"><b></b></div>
<div class="r f"><b></b></div>
<div class="r f"><b></b></div>
<div class="r y"><i>11</i><b><u>N118 !1!3!4</u></b></div>
<div class="r"><i>12</i><b><u>N120 M01</u></b></div>
<div class="r"><i>13</i><b><u>N122 <span class="b">( @@ )</span></u></b></div>
<div class="r f"><b></b></div>
<div class="r f"><b></b></div>
<div class="r f"><b></b></div>
<div class="r f"><b></b></div>
<div class="r f"><b></b></div>
<div class="r f"><b></b></div>
<div class="r y"><i>14</i><b><u>N124 !1!3!4</u></b></div>
<div class="r"><i>15</i><b><u>N126 <span class="b">(TORNIRE ESTERNO)</span></u></b></div>
<div class="r"><i>16</i><b><u>N128 G59X0Y0Z[L61]</u></b></div>
<div class="r"><i>17</i><b><u>N130 G63G95</u></b></div>
<div class="r"><i>18</i><b><u>N132 G97S1=1800M3T101M108</u></b></div>
<div class="r"><i>19</i><b><u><span class="rd">N134 G0X16Z1Y0</span></u></b></div>
<div class="r"><i>20</i><b><u><span class="b">/N136 M115</span></u></b></div>
<div class="r"><i>21</i><b><u>N138 G46</u></b></div>
<div class="r"><i>22</i><b><u><span class="g">N140 G1X14Z0.10F0.5</span></u></b></div>
<div class="r"><i>23</i><b><u><span class="g">N142 G4X1</span></u></b></div>
<div class="r"><i>24</i><b><u><span class="g">N144 G1X4F0.03</span></u></b></div>
<div class="r"><i>25</i><b><u><span class="g">N146 G1Z1</span></u></b></div>
<div class="r"><i>26</i><b><u>N148 G40</u></b></div>
<div class="r"><i>27</i><b><u><span class="rd">N150 G0X8Z2</span></u></b></div>
<div class="r y"><i>28</i><b><u>N152 !3!4</u></b></div>
<div class="r"><i>29</i><b><u>N154 G46</u></b></div>
<div class="r"><i>30</i><b><u><span class="rd">N156 G9X9.78Z0.25</span></u></b></div>
<div class="r"><i>31</i><b><u><span class="rd">N158 G9X12.40</span><span class="b">(Z-0.495)</span><span class="rd">Z-0.490F0.02</span></u></b></div>
<div class="r"><i>32</i><b><u><span class="rd">N160 G9Z-4.15</span><span class="b">(Z-3.7)</span></u></b></div>
<div class="r"><i>33</i><b><u><span class="rd">N162 G9X13.05Z-4.2</span><span class="b">(Z-4.2)</span></u></b></div>
<div class="r"><i>34</i><b><u>N164 G40</u></b></div>
<div class="r"><i>35</i><b><u><span class="rd">N166 G0X15</span></u></b></div>
<div class="r"><i>36</i><b><u><span class="rd">N168 G53X220</span></u></b></div>
<div class="r f"><b></b></div>
<div class="r f"><b></b></div>
<div class="r f"><b></b></div>
<div class="r f"><b></b></div>
<div class="r f"><b></b></div>
<div class="r y"><i>37</i><b><u>N170 !3!4</u></b></div>
<div class="r"><i>38</i><b><u>N172 <span class="b">(TORNIRE SMUSSO POSTERIORE)</span></u></b></div>
<div class="r"><i>39</i><b><u><span class="rd">N174 G59X0Y0Z[L61]</span></u></b></div>
<div class="r"><i>40</i><b><u>N176 G63G95</u></b></div>
<div class="r"><i>41</i><b><u>N178 G97S1=1800M3T808</u></b></div>
<div class="r"><i>42</i><b><u><span class="rd">N180 G0X16Z-1</span></u></b></div>
<div class="r"><i>43</i><b><u><span class="b">/N182 M114</span></u></b></div>
</div></div>
<div class="a" style="left:1145px;top:176px;width:16px;height:1093px;background:#f0f0f0;"></div>
<div class="a" style="left:1145px;top:191px;width:15px;height:328px;background:#cdcdcd;"></div>
<svg class="a" style="left:1149px;top:181px" width="8" height="5" viewBox="0 0 8 5"><path d="M0.5 4.5L4 1L7.5 4.5" fill="none" stroke="#505050" stroke-width="1.6"/></svg>
<svg class="a" style="left:1149px;top:1259px" width="8" height="5" viewBox="0 0 8 5"><path d="M0.5 0.5L4 4L7.5 0.5" fill="none" stroke="#505050" stroke-width="1.6"/></svg>
<div class="a" style="left:1162px;top:176px;width:3px;height:1093px;background:#efefef;"></div>
<div class="pane" style="left:1165px;width:561px">
<div class="a" style="left:0;top:0;width:1px;height:1093px;background:#9a9a9a"></div>
<div class="a" style="left:1px;top:0;width:1px;height:1093px;background:#606060"></div>
<div class="a" style="left:3px;top:0;width:29px;height:1093px;background:#efefef"></div>
<div class="a" style="left:32px;top:0;width:1px;height:1093px;background:#b9b9b9"></div>
<div class="rows">
<div class="r c"><i>1</i><b><u>$3</u></b></div>
<div class="r"><i>2</i><b><u><span class="b">( @ Initialisieren TS3  )</span></u></b></div>
<div class="r"><i>3</i><b><u>G92 X0 Z0</u></b></div>
<div class="r"><i>4</i><b><u>IF [L1332 ]EQ [0]GOTO8001</u></b></div>
<div class="r"><i>5</i><b><u>G53 Z290</u></b></div>
<div class="r"><i>6</i><b><u>M1</u></b></div>
<div class="r f"><b></b></div>
<div class="r y"><i>7</i><b><u>N9019 !2</u></b></div>
<div class="r"><i>8</i><b><u>M11</u></b></div>
<div class="r"><i>9</i><b><u>GT1</u></b></div>
<div class="r"><i>10</i><b><u>GT2</u></b></div>
<div class="r"><i>11</i><b><u>GT3</u></b></div>
<div class="r"><i>12</i><b><u>GT4</u></b></div>
<div class="r y"><i>13</i><b><u>N9019 !2!4</u></b></div>
<div class="r"><i>14</i><b><u>N9020</u></b></div>
<div class="r f"><b></b></div>
<div class="r f"><b></b></div>
<div class="r y"><i>15</i><b><u>N8001 !1!2!4</u></b></div>
<div class="r"><i>16</i><b><u>M01</u></b></div>
<div class="r"><i>17</i><b><u><span class="b">( @@ )</span></u></b></div>
<div class="r f"><b></b></div>
<div class="r f"><b></b></div>
<div class="r f"><b></b></div>
<div class="r f"><b></b></div>
<div class="r f"><b></b></div>
<div class="r f"><b></b></div>
<div class="r y"><i>18</i><b><u>N9001 !1!2!4</u></b></div>
<div class="r"><i>19</i><b><u>G59 X- [L901 ]Z [L61 ]</u></b></div>
<div class="r"><i>20</i><b><u><span class="rd">G0 X0 T0</span></u></b></div>
<div class="r y"><i>21</i><b><u>N9002 !4</u></b></div>
<div class="r"><i>22</i><b><u>N101 <span class="b">(FORARE D7.2)</span></u></b></div>
<div class="r"><i>23</i><b><u>T101</u></b></div>
<div class="r"><i>24</i><b><u><span class="rd">G0 Z20 M350</span></u></b></div>
<div class="r f"><b></b></div>
<div class="r f"><b></b></div>
<div class="r f"><b></b></div>
<div class="r f"><b></b></div>
<div class="r f"><b></b></div>
<div class="r f"><b></b></div>
<div class="r f"><b></b></div>
<div class="r y"><i>25</i><b><u>N9017 !2!4</u></b></div>
<div class="r"><i>26</i><b><u>G97 S7=300 T101 M703 M456</u></b></div>
<div class="r"><i>27</i><b><u><span class="rd">G0 X0</span></u></b></div>
<div class="r"><i>28</i><b><u><span class="rd">G4 X2</span></u></b></div>
<div class="r"><i>29</i><b><u><span class="rd">G0 Z10 M350</span></u></b></div>
<div class="r"><i>30</i><b><u><span class="b">/M115</span></u></b></div>
<div class="r"><i>31</i><b><u><span class="rd">G4 X5</span></u></b></div>
<div class="r"><i>32</i><b><u><span class="rd">G83 g95 Z-6.0 D10 H6 F0.06</span></u></b></div>
<div class="r"><i>33</i><b><u><span class="rd">G0 Z20 M705</span></u></b></div>
<div class="r"><i>34</i><b><u><span class="b">/M116</span></u></b></div>
<div class="r"><i>35</i><b><u>G97 S7=4000 M704</u></b></div>
<div class="r"><i>36</i><b><u><span class="rd">G4 X5</span></u></b></div>
<div class="r"><i>37</i><b><u><span class="rd">G0 Z60 M705 M351</span></u></b></div>
<div class="r"><i>38</i><b><u><span class="rd">G53 Z290</span></u></b></div>
<div class="r y"><i>39</i><b><u>N9003 !2!4</u></b></div>
<div class="r"><i>40</i><b><u><span class="rd">G59 X- [L902 ]</span></u></b></div>
<div class="r"><i>41</i><b><u><span class="rd">G0 X0 T0</span></u></b></div>
<div class="r y"><i>42</i><b><u>N9004 !4</u></b></div>
<div class="r f"><b></b></div>
<div class="r f"><b></b></div>
<div class="r f"><b></b></div>
</div></div>
<div class="a" style="left:1727px;top:176px;width:16px;height:1093px;background:#f0f0f0;"></div>
<div class="a" style="left:1727px;top:191px;width:15px;height:328px;background:#cdcdcd;"></div>
<svg class="a" style="left:1731px;top:181px" width="8" height="5" viewBox="0 0 8 5"><path d="M0.5 4.5L4 1L7.5 4.5" fill="none" stroke="#505050" stroke-width="1.6"/></svg>
<svg class="a" style="left:1731px;top:1259px" width="8" height="5" viewBox="0 0 8 5"><path d="M0.5 0.5L4 4L7.5 0.5" fill="none" stroke="#505050" stroke-width="1.6"/></svg>
<div class="a" style="left:1744px;top:176px;width:3px;height:1093px;background:#efefef;"></div>
<div class="pane" style="left:1747px;width:538px">
<div class="a" style="left:0;top:0;width:1px;height:1093px;background:#9a9a9a"></div>
<div class="a" style="left:1px;top:0;width:1px;height:1093px;background:#606060"></div>
<div class="a" style="left:3px;top:0;width:29px;height:1093px;background:#efefef"></div>
<div class="a" style="left:32px;top:0;width:1px;height:1093px;background:#b9b9b9"></div>
<div class="rows">
<div class="r c"><i>1</i><b><u>$4</u></b></div>
<div class="r"><i>2</i><b><u><span class="b">( @ INITIALISIEREN TS4  )</span></u></b></div>
<div class="r"><i>3</i><b><u>G92X0Z0Y0</u></b></div>
<div class="r"><i>4</i><b><u>IF[L1332]EQ[0]GOTO8001</u></b></div>
<div class="r"><i>5</i><b><u>G53Z290</u></b></div>
<div class="r f"><b></b></div>
<div class="r f"><b></b></div>
<div class="r f"><b></b></div>
<div class="r f"><b></b></div>
<div class="r f"><b></b></div>
<div class="r f"><b></b></div>
<div class="r f"><b></b></div>
<div class="r f"><b></b></div>
<div class="r y"><i>6</i><b><u>N9019!2!3</u></b></div>
<div class="r f"><b></b></div>
<div class="r f"><b></b></div>
<div class="r f"><b></b></div>
<div class="r y"><i>7</i><b><u>N8001!1!2!3</u></b></div>
<div class="r"><i>8</i><b><u>M01</u></b></div>
<div class="r"><i>9</i><b><u><span class="b">( @@ )</span></u></b></div>
<div class="r f"><b></b></div>
<div class="r f"><b></b></div>
<div class="r f"><b></b></div>
<div class="r f"><b></b></div>
<div class="r f"><b></b></div>
<div class="r f"><b></b></div>
<div class="r y"><i>10</i><b><u>N9001!1!2!3</u></b></div>
<div class="r"><i>11</i><b><u>G59X0Y0Z[L37-L912]</u></b></div>
<div class="r"><i>12</i><b><u><span class="rd">G0X0Y0T101M108</span></u></b></div>
<div class="r y"><i>13</i><b><u>N9002!3</u></b></div>
<div class="r"><i>14</i><b><u>N101<span class="b">(INTESTARE)</span></u></b></div>
<div class="r f"><b></b></div>
<div class="r f"><b></b></div>
<div class="r f"><b></b></div>
<div class="r f"><b></b></div>
<div class="r f"><b></b></div>
<div class="r f"><b></b></div>
<div class="r f"><b></b></div>
<div class="r f"><b></b></div>
<div class="r f"><b></b></div>
<div class="r y"><i>15</i><b><u>N9017!2!3</u></b></div>
<div class="r"><i>16</i><b><u>G64</u></b></div>
<div class="r"><i>17</i><b><u>G97 S4=2500 T101 M403M451</u></b></div>
<div class="r"><i>18</i><b><u><span class="rd">G0X16Z0.5Y0.</span></u></b></div>
<div class="r"><i>19</i><b><u>G46</u></b></div>
<div class="r"><i>20</i><b><u><span class="g">G1X13.5Z0F0.8</span></u></b></div>
<div class="r"><i>21</i><b><u><span class="g">G1X5F0.02</span></u></b></div>
<div class="r"><i>22</i><b><u>G40</u></b></div>
<div class="r"><i>23</i><b><u><span class="g">G1Z0.5</span></u></b></div>
<div class="r"><i>24</i><b><u><span class="rd">G0X14</span></u></b></div>
<div class="r"><i>25</i><b><u><span class="rd">G0Z60</span></u></b></div>
<div class="r f"><b></b></div>
<div class="r f"><b></b></div>
<div class="r f"><b></b></div>
<div class="r y"><i>26</i><b><u>N9003!2!3</u></b></div>
<div class="r"><i>27</i><b><u><span class="rd">G59X0Y0Z[L37-L912]</span></u></b></div>
<div class="r"><i>28</i><b><u><span class="rd">G0X0Y0T202M108</span></u></b></div>
<div class="r y"><i>29</i><b><u>N9004!3</u></b></div>
<div class="r"><i>30</i><b><u>N201<span class="b">(ALESARE INTERNO E SMUSSI)</span></u></b></div>
<div class="r"><i>31</i><b><u>G64</u></b></div>
<div class="r"><i>32</i><b><u>G97S4=1200T202M403</u></b></div>
</div></div>
<div class="a" style="left:2286px;top:176px;width:16px;height:1093px;background:#f0f0f0;"></div>
<div class="a" style="left:2286px;top:191px;width:15px;height:328px;background:#cdcdcd;"></div>
<svg class="a" style="left:2290px;top:181px" width="8" height="5" viewBox="0 0 8 5"><path d="M0.5 4.5L4 1L7.5 4.5" fill="none" stroke="#505050" stroke-width="1.6"/></svg>
<svg class="a" style="left:2290px;top:1259px" width="8" height="5" viewBox="0 0 8 5"><path d="M0.5 0.5L4 4L7.5 0.5" fill="none" stroke="#505050" stroke-width="1.6"/></svg>
<div class="a" style="left:35px;top:176px;width:1px;height:16px;background:#000;"></div>
<div class="a" style="left:36px;top:176px;width:1px;height:16px;background:#000;"></div>
<div class="a" style="left:224px;top:149px;width:140px;height:52px;border:1px solid #c4c4c4;background:#fff;box-shadow:3px 3px 3px rgba(0,0,0,0.42)"></div>
<span class="t" style="left:238.20px;top:159.84px;color:#575757;font-weight:bold;letter-spacing:-0.146px;">Print (Ctrl+P)</span>
<span class="t" style="left:238.20px;top:180.84px;color:#5e5e5e;letter-spacing:0.016px;">Print all, or part of file</span>
</body></html>
